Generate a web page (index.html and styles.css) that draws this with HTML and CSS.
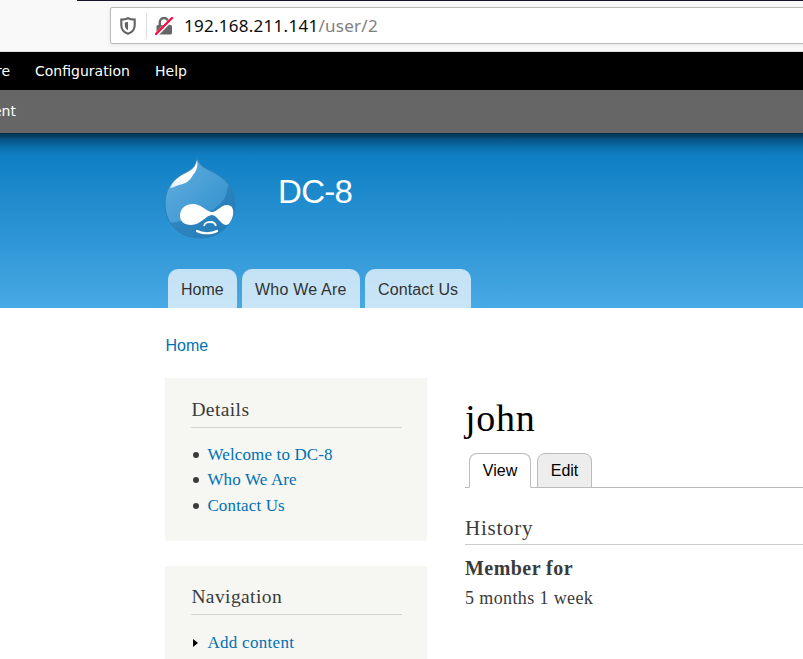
FILE: index.html
```html
<!DOCTYPE html>
<html lang="en">
<head>
<meta charset="utf-8">
<title>john | DC-8</title>
<link rel="stylesheet" href="styles.css">
</head>
<body>
<div class="browser">
  <div class="topline"></div>
  <div class="urlbar">
    <svg class="shield" width="16" height="18" viewBox="0 0 16 18"><path d="M8 1.200C6 2.100 3.800 2.500 1.300 2.600V8c0 4.500 2.500 7.400 6.700 8.800 4.200-1.400 6.700-4.300 6.700-8.800V2.600C12.200 2.500 10 2.100 8 1.200Z" fill="none" stroke="#636363" stroke-width="2.100"/><path d="M8 4.700C7 5.200 6 5.400 4.800 5.500V8c0 2.500 1.100 4.200 3.200 5.200Z" fill="#636363"/></svg>
    <span class="divider"></span>
    <svg class="lock" width="18" height="18" viewBox="0 0 18 18"><path d="M4.800 9V5.200a4.200 4.200 0 0 1 8.400 0V9" fill="none" stroke="#666" stroke-width="2.400"/><rect x="1.500" y="8" width="15.500" height="9.500" rx="1.500" fill="#666"/><path d="M.5 18.500 18 1" stroke="#fff" stroke-width="4"/><path d="M1 17 17 1" stroke="#ff0039" stroke-width="2.200" stroke-linecap="round"/></svg>
    <span class="url">192.168.211.141<span class="path">/user/2</span></span>
  </div>
</div>
<nav class="toolbar"><span class="more">re</span><span class="config">Configuration</span><span>Help</span></nav>
<div class="shortcuts">ent</div>
<header class="header">
  <div class="brand">
    <svg class="logo" width="74" height="82" viewBox="0 0 74 82">
      <defs>
        <linearGradient id="drop" x1="0" y1="0" x2="1" y2="1"><stop offset="0" stop-color="#65b0df"/><stop offset=".5" stop-color="#459dd5"/><stop offset="1" stop-color="#2f88c5"/></linearGradient>
        <linearGradient id="shine" x1="1" y1="0" x2="0" y2="1"><stop offset=".6" stop-color="#fff"/><stop offset="1" stop-color="#fff" stop-opacity=".75"/></linearGradient>
        <clipPath id="shape"><path d="M34 0C37 9 44 11 52 15 66 23 72 33 72 46 72 66 57 80 37 80 17 80 2 66 2 46 2 32 8 23 19 16 27 12 33 9 34 0Z"/></clipPath>
      </defs>
      <g clip-path="url(#shape)">
        <rect width="74" height="82" fill="url(#drop)"/>
        <path d="M65 28C64 40 57 49 45 54 34 59 17 65 2 65V82H74V28Z" fill="#176ba7" opacity=".5"/>
      </g>
      <path d="M34 0C37 9 44 11 52 15 66 23 72 33 72 46 72 66 57 80 37 80 17 80 2 66 2 46 2 32 8 23 19 16 27 12 33 9 34 0Z" fill="none" stroke="#2b80b8" stroke-width="1"/>
      <path d="M34 2C35 8 34 12 30 17 27 23 22 26 16 27 12 28 10 30 7 30 10 22 17 18 25 14 31 11 33 7 34 2Z" fill="url(#shine)"/>
      <path d="M30 46C38 46 44 54 49 54 54 54 58 47 64 47 69 47 71 51 70 57 69 62 66 67 63 67 58 67 54 57 49 57 43 57 38 67 28 67 21 67 17 63 17 58 17 50 23 46 30 46Z" fill="#fff"/>
      <path d="M41 68C42 64 45 64 48 64 51 64 52 65 53 68" fill="none" stroke="#fff" stroke-width="1.800"/>
      <path d="M34 73C39 76 49 76 54 73" fill="none" stroke="#fff" stroke-width="2.200" stroke-linecap="round"/>
    </svg>
    <span class="site-name">DC-8</span>
  </div>
  <nav class="menu"><a class="m1">Home</a><a class="m2">Who We Are</a><a class="m3">Contact Us</a></nav>
</header>
<div class="breadcrumb"><a>Home</a></div>
<div class="columns">
  <aside class="sidebar">
    <section class="block details">
      <h2>Details</h2>
      <ul>
        <li><i class="dot"></i><a>Welcome to DC-8</a></li>
        <li><i class="dot"></i><a>Who We Are</a></li>
        <li><i class="dot"></i><a>Contact Us</a></li>
      </ul>
    </section>
    <section class="block navigation">
      <h2>Navigation</h2>
      <ul><li><i class="arrow"></i><a class="add">Add content</a></li></ul>
    </section>
  </aside>
  <main class="main">
    <h1>john</h1>
    <div class="tabs"><a class="tab active">View</a><a class="tab">Edit</a></div>
    <h3>History</h3>
    <h4>Member for</h4>
    <p>5 months 1 week</p>
  </main>
</div>
</body>
</html>
```
FILE: styles.css
```css
* { box-sizing: border-box; }
body { margin: 0; height: 659px; overflow: hidden; background: #fff; color: #3b3b3b; font-family: Georgia, "Liberation Serif", serif; }
h1, h2, h3, h4, p, ul { margin: 0; padding: 0; font-weight: normal; }
a { color: #0071b3; }
.browser { height: 52px; background: #f9f9fa; border-bottom: 1px solid #ddd; }
.topline { height: 1px; margin-left: 77px; background: #15122b; }
.urlbar { display: flex; align-items: center; height: 37px; margin: 6px -4px 0 110px; padding-left: 9px; background: #fff; border: 1px solid #b9b9b9; border-radius: 2px; box-shadow: 0 1px 4px rgba(0,0,0,.08); }
.divider { width: 1px; height: 26px; margin: 0 8px 0 10px; background: #ddd; }
.url { margin: 1px 0 0 11px; font: 17px/24px "Noto Sans", sans-serif; letter-spacing: .27px; color: #0c0c0d; white-space: nowrap; }
.path { color: #808080; }
.toolbar { display: flex; height: 38px; background: #000; color: #fff; font: 14px/38px "DejaVu Sans", sans-serif; }
.more { width: 39px; margin-left: -4px; }
.config { width: 120px; }
.shortcuts { height: 43px; background: #666; color: #fff; font: 14px/42px "DejaVu Sans", sans-serif; text-indent: -7px; }
.header { display: flex; flex-direction: column; justify-content: space-between; height: 175px; background: linear-gradient(rgba(0,0,0,.62), rgba(0,0,0,.3) 7px, rgba(0,0,0,.08) 16px, transparent 24px), linear-gradient(#0779bf, #48a9e4); }
.brand { display: flex; padding: 25px 0 0 162.5px; }
.site-name { margin: 15px 0 0 41.5px; font: 33px/38px "Liberation Sans", sans-serif; letter-spacing: -.7px; color: #fff; }
.menu { display: flex; gap: 5px; padding-left: 168px; }
.menu a { height: 39px; padding-left: 13px; background: rgba(255,255,255,.7); border-radius: 10px 10px 0 0; color: #333; font: 16px/41px "Liberation Sans", sans-serif; white-space: nowrap; }
.menu .m1 { width: 69px; }
.menu .m2 { width: 118px; letter-spacing: .2px; }
.menu .m3 { width: 106px; letter-spacing: .1px; }
.breadcrumb { height: 70px; padding: 28px 0 0 165.5px; font: 16px/20px "Liberation Sans", sans-serif; }
.columns { display: flex; gap: 38px; padding-left: 165.4px; }
.sidebar { width: 262px; }
.block { height: 163px; padding: 19px 25px 0 26px; background: #f6f6f2; }
.block + .block { margin-top: 25px; }
h2, h3 { font-size: 19.5px; line-height: 25px; letter-spacing: .4px; }
h2 { height: 31px; border-bottom: 1px solid #d3d7d4; }
.navigation { padding-top: 18px; }
.navigation ul { padding-top: 15px; }
ul { padding-top: 14px; list-style: none; }
li { display: flex; align-items: center; height: 25.6px; font-size: 17px; letter-spacing: .14px; white-space: nowrap; }
.add { letter-spacing: .3px; }
.dot { width: 6px; height: 6px; margin: 0 8px 0 2px; border-radius: 50%; background: #3b3b3b; }
.arrow { margin: 0 9px 0 2px; border: 4px solid transparent; border-left: 5px solid #000; border-right: 0; }
.main { flex: 1; padding-top: 16px; margin-left: -.4px; }
h1 { height: 59px; font-size: 38px; line-height: 48px; letter-spacing: .7px; color: #000; }
.tabs { display: flex; gap: 6px; height: 35px; padding-left: 4px; border-bottom: 1px solid #bbb; }
.tab { width: 55px; height: 35px; background: #ededed; border: 1px solid #bbb; border-radius: 8px 8px 0 0; color: #000; font: 16px/33px "Liberation Sans", sans-serif; text-align: center; }
.active { width: 62px; background: #fff; border-bottom-color: #fff; }
h3 { height: 57px; padding-top: 28px; border-bottom: 1px solid #ccc; font-size: 21px; letter-spacing: .75px; }
h4 { padding-top: 10px; font-size: 20px; font-weight: bold; line-height: 26px; letter-spacing: .45px; }
p { padding-top: 4px; font-size: 18px; line-height: 26px; letter-spacing: .38px; }
```
